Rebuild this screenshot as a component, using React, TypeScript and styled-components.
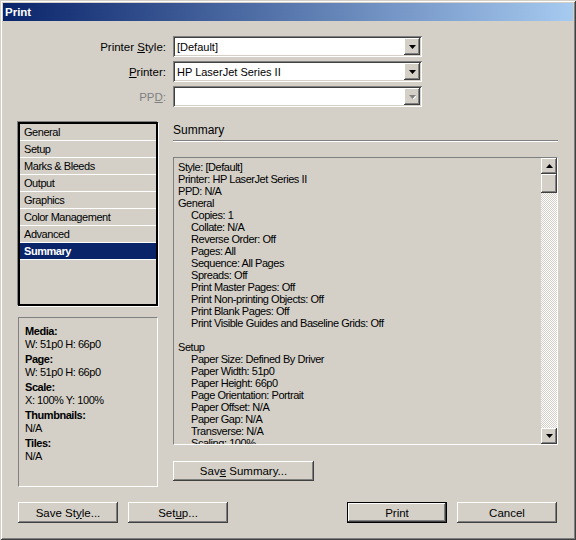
import React from 'react';
import styled, { createGlobalStyle, css } from 'styled-components';

// --- Global ---
const GlobalStyle = createGlobalStyle`
  html, body { margin: 0; padding: 0; background: #d4d0c8; }
  body {
    font-family: "Liberation Sans", Arial, sans-serif;
    font-size: 11px;
    color: #000;
  }
  * { box-sizing: border-box; }
`;

// classic 3D bevels
const raised = css`
  box-shadow: inset -1px -1px #404040, inset 1px 1px #fff, inset -2px -2px #808080, inset 2px 2px #d4d0c8;
`;
const sunken = css`
  box-shadow: inset 1px 1px #808080, inset -1px -1px #fff, inset 2px 2px #404040, inset -2px -2px #d4d0c8;
`;
const adobeFont = css`
  font-family: "Liberation Sans", Arial, sans-serif;
  font-size: 11px;
  letter-spacing: -0.45px;
`;

// --- Window frame ---
const Window = styled.div`
  width: 576px;
  height: 540px;
  padding: 3px;
  background: #d4d0c8;
  box-shadow: inset 1px 1px #d4d0c8, inset -1px -1px #404040, inset 2px 2px #fff, inset -2px -2px #808080;
  display: flex;
  flex-direction: column;
`;

const TitleBar = styled.div`
  height: 18px;
  padding-left: 2px;
  display: flex;
  align-items: center;
  background: linear-gradient(to right, #0a246a, #a6caf0);
  color: #fff;
  font-weight: bold;
  font-size: 11.5px;
`;

const Content = styled.div`
  padding: 15px 16px 0 15px;
  display: flex;
  flex-direction: column;
`;

// --- Top form ---
const Form = styled.div`
  display: grid;
  grid-template-columns: 148px 249px;
  grid-auto-rows: 21px;
  column-gap: 7px;
  row-gap: 4px;
`;

const Label = styled.label<{ $disabled?: boolean }>`
  display: flex;
  align-items: center;
  justify-content: flex-end;
  font-size: 11.5px;
  white-space: pre;
  color: ${p => (p.$disabled ? '#808080' : '#000')};
`;

const Key = styled.span`
  text-decoration: underline;
`;

const Combo = styled.div`
  height: 21px;
  padding: 2px;
  background: #fff;
  display: flex;
  align-items: stretch;
  ${sunken}
`;

const ComboValue = styled.span`
  flex: 1;
  padding-left: 2px;
  display: flex;
  align-items: center;
  font-size: 11px;
  white-space: nowrap;
`;

const ArrowButton = styled.span<{ $h?: number }>`
  width: 16px;
  height: ${p => p.$h ?? 17}px;
  flex: none;
  background: #d4d0c8;
  display: flex;
  align-items: center;
  justify-content: center;
  ${raised}
`;

const Arrow = ({ up = false, disabled = false }: { up?: boolean; disabled?: boolean }) => (
  <svg width="7" height="4" viewBox="0 0 7 4" style={{ display: 'block' }}>
    {disabled && <polygon points={up ? '1.5,4 4.5,1 8,4.5' : '1,1 8,1 4.5,4.5'} fill="#fff" />}
    <polygon points={up ? '0,4 3.5,0 7,4' : '0,0 7,0 3.5,4'} fill={disabled ? '#808080' : '#000'} />
  </svg>
);

// --- Main area ---
const Main = styled.div`
  margin-top: 15px;
  height: 365px;
  display: grid;
  grid-template-columns: 140px 385px;
  column-gap: 15px;
`;

const Column = styled.div`
  display: flex;
  flex-direction: column;
  align-items: flex-start;
`;

const NavList = styled.div`
  width: 140px;
  height: 184px;
  border: 2px solid #000;
  box-shadow: -1px -1px #808080, 1px 1px #fff;
  background: #d4d0c8;
`;

const NavItem = styled.div<{ $selected?: boolean }>`
  height: 17px;
  padding-left: 4px;
  display: flex;
  align-items: center;
  border-bottom: 1px solid #fff;
  ${adobeFont}
  background: ${p => (p.$selected ? '#0a246a' : 'transparent')};
  color: ${p => (p.$selected ? '#fff' : '#000')};
  font-weight: ${p => (p.$selected ? 'bold' : 'normal')};
`;

const InfoPanel = styled.div`
  margin-top: 11px;
  width: 140px;
  height: 170px;
  padding: 7px 6px;
  border: 1px solid;
  border-color: #808080 #fff #fff #808080;
  ${adobeFont}
  line-height: 13px;
`;

const InfoGroup = styled.div`
  margin-bottom: 2px;
`;

const InfoLabel = styled.div`
  font-weight: bold;
`;

const Heading = styled.div`
  width: 385px;
  height: 19px;
  padding-top: 1px;
  font-size: 12px;
  border-bottom: 1px solid #808080;
  box-shadow: 0 1px #fff;
`;

const SummaryBox = styled.div`
  margin-top: 16px;
  width: 385px;
  height: 288px;
  display: flex;
  border: 1px solid;
  border-color: #808080 #fff #fff #808080;
`;

const SummaryText = styled.div`
  flex: 1;
  overflow: hidden;
  padding: 3px 4px;
  ${adobeFont}
  line-height: 12px;
`;

const SummaryLine = styled.div<{ $indent?: boolean }>`
  height: 12px;
  padding-left: ${p => (p.$indent ? 13 : 0)}px;
  white-space: pre;
`;

const Scrollbar = styled.div`
  width: 16px;
  display: flex;
  flex-direction: column;
`;

const Thumb = styled.div`
  height: 19px;
  background: #d4d0c8;
  ${raised}
`;

const Track = styled.div`
  flex: 1;
  background: repeating-conic-gradient(#fff 0 25%, #d4d0c8 0 50%) 0 0 / 2px 2px;
`;

// --- Buttons ---
const Button = styled.button<{ $width?: number; $default?: boolean }>`
  width: ${p => p.$width ?? 100}px;
  height: 21px;
  padding: 0;
  border: none;
  background: #d4d0c8;
  color: #000;
  font-family: "Liberation Sans", Arial, sans-serif;
  font-size: 11.5px;
  ${raised}
  ${p =>
    p.$default &&
    css`
      border: 1px solid #000;
    `}
`;

const SaveSummary = styled(Button)`
  margin-top: 16px;
  height: 20px;
`;

const ButtonRow = styled.div`
  margin-top: 15px;
  display: flex;
  gap: 10px;
`;

const Spacer = styled.div`
  flex: 1;
`;

// --- Data ---
const navItems = ['General', 'Setup', 'Marks & Bleeds', 'Output', 'Graphics', 'Color Management', 'Advanced', 'Summary'];

const summary: [string, boolean][] = [
  ['Style: [Default]', false],
  ['Printer: HP LaserJet Series II', false],
  ['PPD: N/A', false],
  ['General', false],
  ['Copies: 1', true],
  ['Collate: N/A', true],
  ['Reverse Order: Off', true],
  ['Pages: All', true],
  ['Sequence: All Pages', true],
  ['Spreads: Off', true],
  ['Print Master Pages: Off', true],
  ['Print Non-printing Objects: Off', true],
  ['Print Blank Pages: Off', true],
  ['Print Visible Guides and Baseline Grids: Off', true],
  ['', false],
  ['Setup', false],
  ['Paper Size: Defined By Driver', true],
  ['Paper Width: 51p0', true],
  ['Paper Height: 66p0', true],
  ['Page Orientation: Portrait', true],
  ['Paper Offset: N/A', true],
  ['Paper Gap: N/A', true],
  ['Transverse: N/A', true],
  ['Scaling: 100%', true],
];

const info = [
  ['Media:', 'W: 51p0 H: 66p0'],
  ['Page:', 'W: 51p0 H: 66p0'],
  ['Scale:', 'X: 100% Y: 100%'],
  ['Thumbnails:', 'N/A'],
  ['Tiles:', 'N/A'],
];

const App: React.FC = () => {
  return (
    <>
      <GlobalStyle />
      <Window>
        <TitleBar>Print</TitleBar>
        <Content>
          <Form>
            <Label><span>Printer <Key>S</Key>tyle:</span></Label>
            <Combo>
              <ComboValue>[Default]</ComboValue>
              <ArrowButton><Arrow /></ArrowButton>
            </Combo>

            <Label><span><Key>P</Key>rinter:</span></Label>
            <Combo>
              <ComboValue>HP LaserJet Series II</ComboValue>
              <ArrowButton><Arrow /></ArrowButton>
            </Combo>

            <Label $disabled><span>PP<Key>D</Key>:</span></Label>
            <Combo>
              <ComboValue />
              <ArrowButton><Arrow disabled /></ArrowButton>
            </Combo>
          </Form>

          <Main>
            <Column>
              <NavList>
                {navItems.map(item => (
                  <NavItem key={item} $selected={item === 'Summary'}>{item}</NavItem>
                ))}
              </NavList>

              <InfoPanel>
                {info.map(([label, value]) => (
                  <InfoGroup key={label}>
                    <InfoLabel>{label}</InfoLabel>
                    <div>{value}</div>
                  </InfoGroup>
                ))}
              </InfoPanel>
            </Column>

            <Column>
              <Heading>Summary</Heading>
              <SummaryBox>
                <SummaryText>
                  {summary.map(([text, indent], i) => (
                    <SummaryLine key={i} $indent={indent}>{text}</SummaryLine>
                  ))}
                </SummaryText>
                <Scrollbar>
                  <ArrowButton $h={16}><Arrow up /></ArrowButton>
                  <Thumb />
                  <Track />
                  <ArrowButton $h={16}><Arrow /></ArrowButton>
                </Scrollbar>
              </SummaryBox>
              <SaveSummary $width={141}>Sav<Key>e</Key> Summary...</SaveSummary>
            </Column>
          </Main>

          <ButtonRow>
            <Button>Save St<Key>y</Key>le...</Button>
            <Button>Set<Key>u</Key>p...</Button>
            <Spacer />
            <Button $default>Print</Button>
            <Button>Cancel</Button>
          </ButtonRow>
        </Content>
      </Window>
    </>
  );
};

export default App;
